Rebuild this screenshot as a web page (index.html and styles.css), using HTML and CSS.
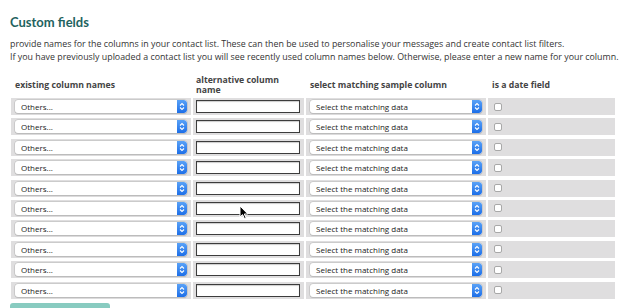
FILE: index.html
```html
<!DOCTYPE html>
<html>
<head>
<meta charset="utf-8">
<link rel="stylesheet" href="styles.css">
</head>
<body>
<div class="page">
  <h1 class="title">Custom fields</h1>
  <p class="desc">provide names for the columns in your contact list. These can then be used to personalise your messages and create contact list filters.<br>If you have previously uploaded a contact list you will see recently used column names below. Otherwise, please enter a new name for your column.</p>
  <div class="table">
    <div class="row head">
      <div class="th">existing column names</div>
      <div class="th">alternative column name</div>
      <div class="th">select matching sample column</div>
      <div class="th">is a date field</div>
    </div>
    <div class="rows" id="rows"></div>
  </div>
  <div class="button"></div>
  <svg class="cursor" width="10" height="15" viewBox="0 0 10 15"><path d="M1 1 L1 12 L3.6 9.6 L5.6 14 L7.2 13.3 L5.3 9 L8.8 9 Z" fill="#000" stroke="#fff" stroke-width="1"/></svg>
</div>
<script>
  var rows = document.getElementById('rows');
  var html = '';
  for (var i = 0; i < 10; i++) {
    html += '<div class="row">' +
      '<div class="td c1"><div class="sel"><span class="sel-text">Others...</span><span class="sel-btn"><svg width="6" height="9" viewBox="0 0 6 9"><path d="M1 3.5 L3 1.5 L5 3.5 M1 5.5 L3 7.5 L5 5.5" fill="none" stroke="#fff" stroke-width="1.1"/></svg></span></div></div>' +
      '<div class="td c2"><div class="inp"></div></div>' +
      '<div class="td c3"><div class="sel"><span class="sel-text">Select the matching data</span><span class="sel-btn"><svg width="6" height="9" viewBox="0 0 6 9"><path d="M1 3.5 L3 1.5 L5 3.5 M1 5.5 L3 7.5 L5 5.5" fill="none" stroke="#fff" stroke-width="1.1"/></svg></span></div></div>' +
      '<div class="td c4"><div class="chk"></div></div>' +
      '</div>';
  }
  rows.innerHTML = html;
</script>
</body>
</html>
```
FILE: styles.css
```css
html, body {
  margin: 0;
  padding: 0;
  background: #fff;
}
.page {
  position: relative;
  width: 640px;
  height: 308px;
  overflow: hidden;
  padding-left: 10px;
  box-sizing: border-box;
  font-family: "Open Sans", "DejaVu Sans", sans-serif;
}
.title {
  margin: 0;
  padding-top: 13px;
  font-family: Lato, "Open Sans", sans-serif;
  font-weight: bold;
  font-size: 13px;
  line-height: 18px;
  color: #1f6360;
}
.desc {
  margin: 7px 0 0 0;
  font-size: 8.85px;
  line-height: 13px;
  color: #333;
}
.table {
  margin-left: 1px;
  margin-top: 10px;
}
.row {
  display: grid;
  grid-template-columns: 180px 111px 180px 127px;
  column-gap: 2px;
}
.rows {
  display: grid;
  row-gap: 3.4px;
}
.head {
  height: 22px;
  margin-bottom: 2px;
  align-items: center;
}
.th {
  font-weight: bold;
  font-size: 8.7px;
  line-height: 10px;
  color: #444;
  padding-left: 4px;
}
.head .th:nth-child(2) {
  padding-left: 3px;
  padding-right: 20px;
}
.td {
  background: #dfdedf;
  height: 17px;
  display: flex;
  align-items: center;
  box-sizing: border-box;
}
.c1, .c3 {
  padding: 0 4px;
}
.c2 {
  padding: 0 4px 0 3px;
}
.c4 {
  padding-left: 6px;
}
.sel {
  flex: 1;
  height: 13px;
  display: flex;
  align-items: stretch;
  background: #fff;
  border-radius: 3px;
  box-shadow: 0 0 0 0.5px #b8b8b8, 0 1px 1px rgba(0,0,0,0.15);
  overflow: hidden;
}
.sel-text {
  flex: 1;
  padding-left: 6px;
  font-size: 8px;
  line-height: 13px;
  color: #222;
  white-space: nowrap;
}
.sel-btn {
  width: 10px;
  background: linear-gradient(#5aa2f7, #1c6ee8);
  display: flex;
  align-items: center;
  justify-content: center;
  border-radius: 0 3px 3px 0;
}
.inp {
  flex: 1;
  height: 13px;
  box-sizing: border-box;
  background: #fff;
  border: 1px solid #3c3c3c;
  box-shadow: inset 0 1px 1px rgba(0,0,0,0.2);
}
.chk {
  width: 8px;
  height: 8px;
  box-sizing: border-box;
  background: #fff;
  border: 1px solid #a8a8a8;
  border-radius: 2px;
}
.button {
  position: absolute;
  left: 10px;
  top: 303px;
  width: 100px;
  height: 12px;
  background: #88cbc0;
  border-radius: 3px 3px 0 0;
}
.cursor {
  position: absolute;
  left: 239px;
  top: 205px;
}
```
